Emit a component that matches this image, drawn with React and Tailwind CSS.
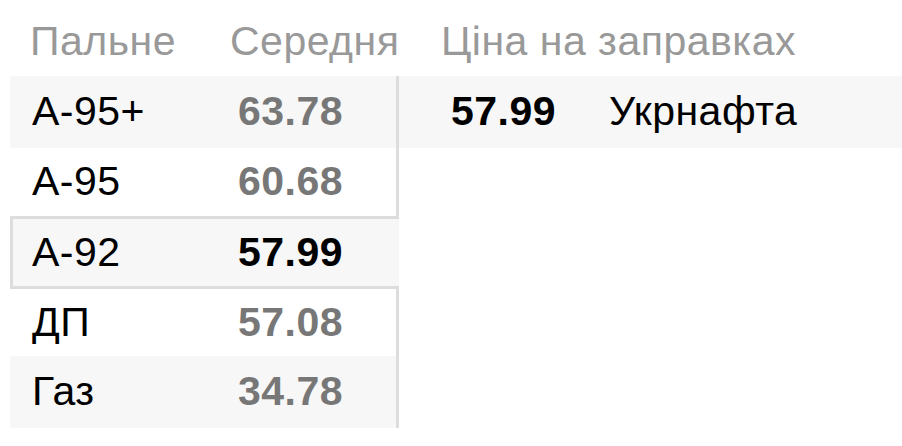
import React from "react";

const fuels = [
  { name: "А-95+", price: "63.78", h: "h-[72px]", shaded: true },
  { name: "А-95", price: "60.68", h: "h-[68px]" },
  { name: "А-92", price: "57.99", h: "h-[73px]", active: true },
  { name: "ДП", price: "57.08", h: "h-[67px]" },
  { name: "Газ", price: "34.78", h: "h-[72px]", shaded: true },
];

export default function App() {
  return (
    <div className="min-h-screen bg-white pl-[10px] font-['Liberation_Sans',Arial,sans-serif] text-[41px] tracking-[0.5px] text-black">
      {/* Column headers */}
      <div className="flex pt-[20px] pb-[14px] leading-[42px] text-[#999999]">
        <span className="w-[220px] pl-[20px]">Пальне</span>
        <span className="w-[211px]">Середня</span>
        <span>Ціна на заправках</span>
      </div>

      <div className="flex">
        {/* Fuel list */}
        <div className="w-[389px] flex flex-col border-r-[3px] border-[#dddddd]">
          {fuels.map((f) =>
            f.active ? (
              <div
                key={f.name}
                className={`${f.h} relative -mr-[3px] flex items-center border-[3px] border-r-0 border-[#dddddd] bg-[#f7f7f7]`}
              >
                <span className="w-[225px] pl-[19px]">{f.name}</span>
                <span className="font-bold">{f.price}</span>
              </div>
            ) : (
              <div
                key={f.name}
                className={`${f.h} flex items-center ${f.shaded ? "bg-[#f7f7f7]" : ""}`}
              >
                <span className="w-[228px] pl-[22px]">{f.name}</span>
                <span className="font-bold text-[#777777]">{f.price}</span>
              </div>
            )
          )}
        </div>

        {/* Station prices for the selected fuel */}
        <div className="flex-1">
          <div className="h-[72px] flex items-center bg-[#f7f7f7]">
            <span className="w-[210px] pl-[52px] font-bold">57.99</span>
            <span>Укрнафта</span>
          </div>
        </div>
      </div>
    </div>
  );
}
